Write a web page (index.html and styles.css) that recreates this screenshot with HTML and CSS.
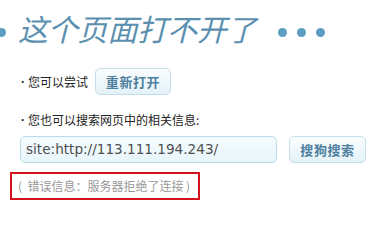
FILE: index.html
```html
<!DOCTYPE html>
<html lang="zh-CN">
<head>
<meta charset="utf-8">
<link rel="stylesheet" href="styles.css">
</head>
<body>
<div class="page">
  <div class="header">
    <span class="dot dot-lead"></span>
    <h1 class="title">这个页面打不开了</h1>
    <div class="dots"><span class="dot"></span><span class="dot"></span><span class="dot"></span></div>
  </div>
  <div class="row row-retry">
    <span class="tip"><span class="bullet">·</span>您可以尝试</span>
    <span class="btn btn-retry">重新打开</span>
  </div>
  <div class="row row-search-tip">
    <span class="tip"><span class="bullet">·</span>您也可以搜索网页中的相关信息:</span>
  </div>
  <div class="search">
    <div class="input">site:http://113.111.194.243/</div>
    <span class="btn btn-search">搜狗搜索</span>
  </div>
  <div class="error">(&nbsp;&nbsp;错误信息：服务器拒绝了连接&nbsp;)</div>
</div>
</body>
</html>
```
FILE: styles.css
```css
html, body {
  margin: 0;
  padding: 0;
  background: #ffffff;
}
.page {
  width: 380px;
  height: 209px;
  overflow: hidden;
  font-family: "Noto Sans CJK SC", "Noto Sans", sans-serif;
  color: #222;
}
.header {
  display: flex;
  align-items: center;
  height: 32px;
  margin-top: 12px;
}
.dot {
  display: block;
  width: 9px;
  height: 9px;
  border-radius: 50%;
  background: #5b9ec2;
}
.dot-lead {
  margin-left: -3px;
  margin-top: 9px;
}
.title {
  margin: 0 0 0 12px;
  font-size: 30px;
  line-height: 32px;
  font-weight: 400;
  font-style: italic;
  color: #5b90b0;
  letter-spacing: -0.2px;
}
.dots {
  display: flex;
  gap: 10px;
  margin-left: 22px;
  margin-top: 9px;
}
.row {
  display: flex;
  align-items: center;
  padding-left: 18px;
  font-size: 12px;
  color: #222;
}
.row-retry {
  margin-top: 24px;
  height: 27px;
  gap: 7px;
}
.row-search-tip {
  margin-top: 17px;
  height: 16px;
}
.tip {
  display: flex;
  align-items: center;
  line-height: 16px;
}
.bullet {
  display: inline-block;
  width: 10px;
  text-align: center;
  font-family: "Liberation Sans", sans-serif;
  font-weight: 700;
}
.btn {
  display: flex;
  align-items: center;
  justify-content: center;
  box-sizing: border-box;
  height: 27px;
  border: 1px solid #c3dfea;
  border-radius: 5px;
  background: linear-gradient(#fbfdfe, #e3f2f8);
  font-size: 13px;
  font-weight: 700;
  color: #4d7f9e;
  letter-spacing: 0.6px;
}
.btn-retry {
  width: 76px;
}
.search {
  display: flex;
  gap: 12px;
  padding-left: 20px;
  margin-top: 8px;
}
.input {
  box-sizing: border-box;
  width: 257px;
  height: 27px;
  border: 1px solid #bcdbe8;
  border-radius: 5px;
  background: linear-gradient(#f4fbfd, #e8f6fb);
  padding-left: 5px;
  font-family: "DejaVu Sans", sans-serif;
  font-size: 13.6px;
  line-height: 25px;
  color: #505050;
}
.btn-search {
  width: 77px;
}
.error {
  box-sizing: border-box;
  width: 190px;
  height: 28px;
  margin: 9px 0 0 10px;
  border: 2px solid #d4121c;
  padding-left: 6px;
  font-size: 12px;
  line-height: 24px;
  color: #999;
  white-space: nowrap;
}
```
